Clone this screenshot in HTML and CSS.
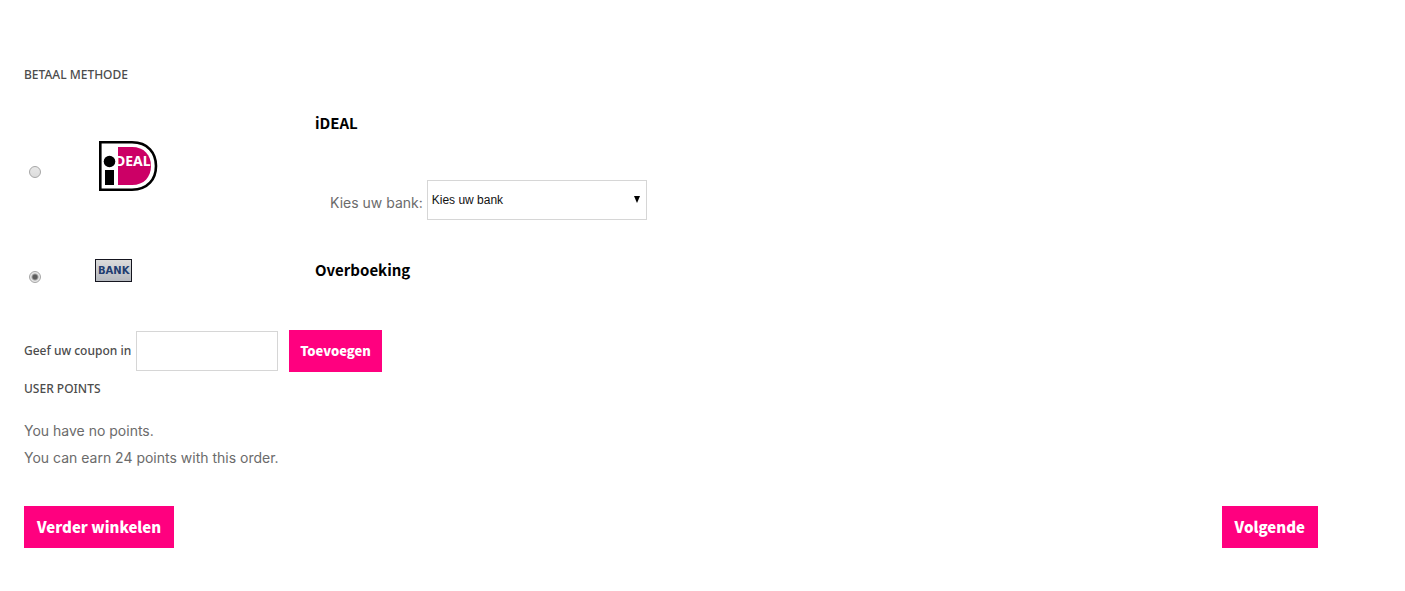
FILE: index.html
```html
<!DOCTYPE html>
<html lang="nl">
<head>
<meta charset="utf-8">
<title>Betaal methode</title>
<link rel="stylesheet" href="styles.css">
</head>
<body>
<form class="checkout">
  <h2 class="section-title">BETAAL METHODE</h2>

  <div class="method method-ideal">
    <input class="radio" type="radio" name="method" id="ideal" aria-label="iDEAL">
    <label class="logo" for="ideal">
      <svg width="59" height="50" viewBox="0 0 59 50" role="img" aria-label="iDEAL logo">
        <path d="M1.300 1.300H33C49 1.300 57 12 57 25S49 48.700 33 48.700H1.300Z" fill="#fff" stroke="#000" stroke-width="2.600"/>
        <path d="M19 6H33C45 6 52 14 52 25S45 44 33 44H19Z" fill="#cc0066"/>
        <text class="ideal-word" x="16" y="25">DEAL</text>
        <circle cx="10.500" cy="20.500" r="5.800"/>
        <path d="M6 29H15V44H6Z"/>
      </svg>
    </label>
    <div class="method-info">
      <h3 class="method-name">iDEAL</h3>
      <div class="bank-row">
        <label for="bank">Kies uw bank:</label>
        <div class="select-wrap">
          <select class="bank" id="bank"><option>Kies uw bank</option></select>
          <svg class="arrow" width="6" height="7" viewBox="0 0 6 7" aria-hidden="true"><path d="M0 0H6L3 7Z"/></svg>
        </div>
      </div>
    </div>
  </div>

  <div class="method method-transfer">
    <input class="radio" type="radio" name="method" id="transfer" aria-label="Overboeking" checked>
    <label class="logo" for="transfer">
      <svg class="bank-logo" width="37" height="23" viewBox="0 0 37 23" role="img" aria-label="Bank logo">
        <defs><linearGradient id="silver" x1="0" y1="0" x2="0" y2="1"><stop offset="0" stop-color="#dcdcdc"/><stop offset="1" stop-color="#b4b8be"/></linearGradient></defs>
        <rect x="0.500" y="0.500" width="36" height="22" fill="url(#silver)" stroke="#15151f"/>
        <text class="bank-word" x="3" y="15">BANK</text>
      </svg>
    </label>
    <div class="method-info"><h3 class="method-name">Overboeking</h3></div>
  </div>

  <div class="coupon-row">
    <label class="coupon-label" for="coupon">Geef uw coupon in</label>
    <input class="coupon" id="coupon" type="text">
    <button class="button button-small" type="button">Toevoegen</button>
  </div>

  <h2 class="section-title">USER POINTS</h2>
  <div class="points">
    <p>You have no points.</p>
    <p>You can earn 24 points with this order.</p>
  </div>

  <div class="actions">
    <button class="button" type="button">Verder winkelen</button>
    <button class="button" type="button">Volgende</button>
  </div>
</form>
</body>
</html>
```

FILE: styles.css
```css
* { box-sizing: border-box; }
body {
  margin: 0;
  background: #fff;
  color: #6b6b6b;
  font: 14px/27px Inter, sans-serif;
}
h2, h3, p { margin: 0; }
.checkout { padding: 65px 87px 40px 24px; }
.section-title {
  color: #4c4c4c;
  font: 500 12px/20px "Noto Sans", sans-serif;
}
.method {
  display: grid;
  grid-template-columns: 71px 220px 1fr;
}
.method-ideal { padding-top: 25px; }
.method-transfer { padding-top: 37px; }
.radio {
  appearance: none;
  width: 12px;
  height: 12px;
  margin: 0 0 0 5px;
  border: 1px solid #a6a6a6;
  border-radius: 50%;
  background: linear-gradient(#e8e8e8, #dcdcdc);
}
.radio:checked { background: radial-gradient(circle, #5c5c5c 0 2px, #e6e6e6 4px); }
.method-ideal .radio { margin-top: 56px; }
.method-transfer .radio { margin-top: 14px; }
.logo svg { display: block; }
.method-ideal .logo { padding: 31px 0 0 4px; }
.method-transfer .logo { padding-top: 2px; }
.ideal-word { font: 700 14px "Noto Sans", sans-serif; fill: #fff; }
.bank-word { font: 700 10px "DejaVu Sans", sans-serif; fill: #203c70; }
.method-name {
  color: #000;
  font: 700 15px/26px "Noto Sans CJK SC", sans-serif;
}
.bank-row {
  display: flex;
  align-items: center;
  gap: 4px;
  padding: 44px 0 0 15px;
}
.bank-row label { padding-top: 5px; }
.select-wrap { position: relative; }
.bank {
  display: block;
  appearance: none;
  width: 220px;
  height: 40px;
  padding: 0 20px 0 4px;
  border: 1px solid #d6d6d6;
  border-radius: 0;
  background: #fff;
  color: #111;
  font: 12px "Liberation Sans", sans-serif;
}
.arrow {
  position: absolute;
  top: 16px;
  right: 7px;
  pointer-events: none;
}
.coupon-row {
  display: flex;
  align-items: center;
  padding: 47px 0 7px;
}
.coupon-label {
  color: #4c4c4c;
  font: 500 12px/20px "Noto Sans", sans-serif;
}
.coupon {
  width: 142px;
  height: 40px;
  margin: 0 11px 0 5px;
  padding: 0 8px;
  border: 1px solid #d6d6d6;
}
.button {
  height: 42px;
  padding: 0 13px;
  border: 0;
  background: #ff007f;
  color: #fff;
  font: 900 15px/24px "Noto Sans CJK SC Black", "Noto Sans CJK SC", sans-serif;
}
.button-small {
  padding: 0 11px;
  font-size: 13px;
}
.points { padding-top: 18px; }
.actions {
  display: flex;
  justify-content: space-between;
  padding-top: 35px;
}
```
